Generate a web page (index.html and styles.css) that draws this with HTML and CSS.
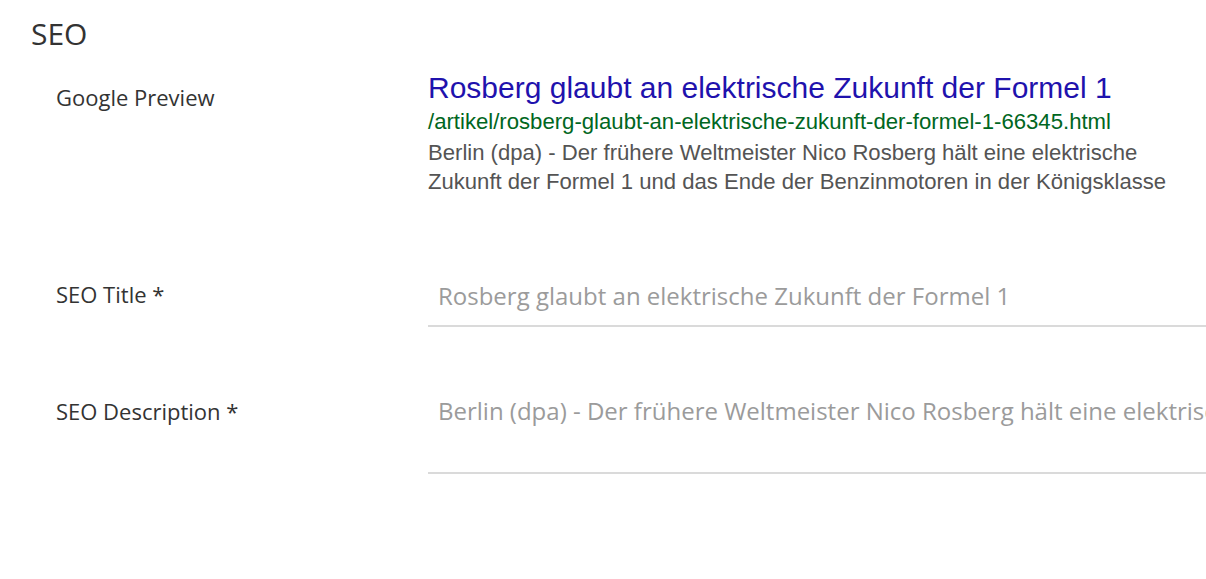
FILE: index.html
```html
<!DOCTYPE html>
<html lang="de">
<head>
<meta charset="utf-8">
<title>SEO</title>
<link rel="stylesheet" href="styles.css">
</head>
<body>
<section class="seo">
  <h2 class="seo-heading">SEO</h2>
  <div class="row row-preview">
    <div class="label">Google Preview</div>
    <div class="preview">
      <div class="preview-title">Rosberg glaubt an elektrische Zukunft der Formel 1</div>
      <div class="preview-url">/artikel/rosberg-glaubt-an-elektrische-zukunft-der-formel-1-66345.html</div>
      <div class="preview-desc">Berlin (dpa) - Der frühere Weltmeister Nico Rosberg hält eine elektrische<br>Zukunft der Formel 1 und das Ende der Benzinmotoren in der Königsklasse</div>
    </div>
  </div>
  <div class="row row-title">
    <div class="label">SEO Title *</div>
    <div class="field field-title">Rosberg glaubt an elektrische Zukunft der Formel 1</div>
  </div>
  <div class="row row-desc">
    <div class="label">SEO Description *</div>
    <div class="field field-desc">Berlin (dpa) - Der frühere Weltmeister Nico Rosberg hält eine elektrische Zukunft der Formel 1 und das Ende der Benzinmotoren in der Königsklasse</div>
  </div>
</section>
</body>
</html>
```

FILE: styles.css
```css
html, body {
  margin: 0;
  padding: 0;
  background: #ffffff;
  overflow: hidden;
}
body {
  width: 1206px;
  height: 579px;
  font-family: "Open Sans", "Noto Sans", sans-serif;
  color: #333333;
}
.seo {
  padding: 14px 0 0 31px;
}
.seo-heading {
  margin: 0;
  font-weight: 400;
  font-size: 30px;
  line-height: 40px;
  color: #333333;
}
.row {
  display: grid;
  grid-template-columns: 372px 800px;
  padding-left: 25px;
}
.label {
  font-size: 22px;
  line-height: 30px;
  color: #333333;
}
.row-preview {
  margin-top: 18px;
}
.row-preview .label {
  margin-top: 10px;
}
.preview {
  font-family: "Liberation Sans", Arial, sans-serif;
}
.preview-title {
  font-size: 30px;
  line-height: 32px;
  color: #1f12ad;
}
.preview-url {
  margin-top: 3px;
  font-size: 22.15px;
  line-height: 30px;
  color: #006621;
}
.preview-desc {
  margin-top: 1px;
  font-size: 22.1px;
  line-height: 29px;
  color: #545454;
}
.row-title {
  margin-top: 83px;
}
.field {
  padding: 0 0 0 10px;
  font-size: 24px;
  line-height: 30px;
  color: #9b9b9b;
  white-space: nowrap;
  border-bottom: 2px solid #dadada;
}
.field-title {
  margin-top: 2px;
  padding-bottom: 14px;
}
.row-desc {
  margin-top: 69px;
}
.field-desc {
  overflow: hidden;
  padding-bottom: 46px;
}
```
